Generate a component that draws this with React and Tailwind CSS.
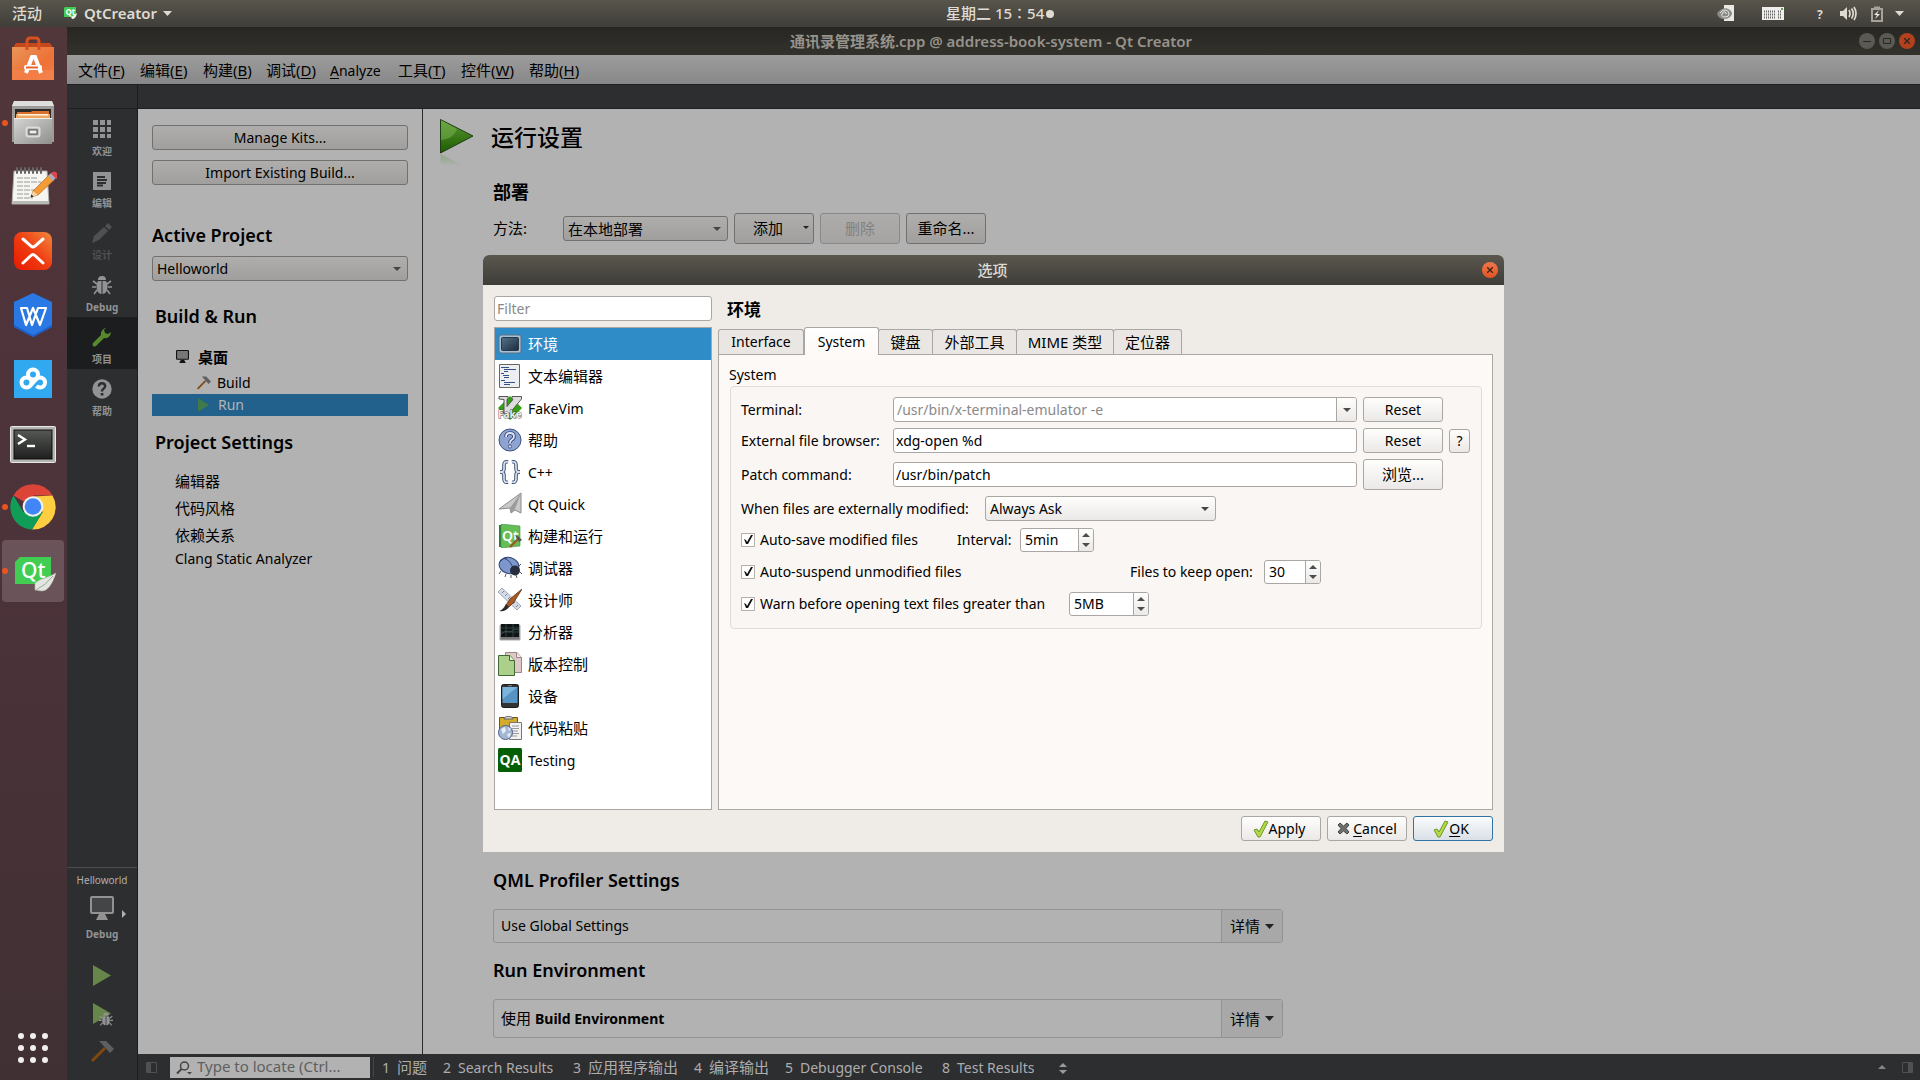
import { useState } from 'react'

const dockItems = [
  { name: 'Ubuntu Software', icon: SoftwareIcon },
  { name: 'Files', icon: FilesIcon, running: true },
  { name: 'Text Editor', icon: NotesIcon },
  { name: 'XMind', icon: XmindIcon },
  { name: 'WPS', icon: WpsIcon },
  { name: 'Baidu Netdisk', icon: NetdiskIcon },
  { name: 'Terminal', icon: TerminalIcon },
  { name: 'Chrome', icon: ChromeIcon, running: true },
  { name: 'Qt Creator', icon: QtIcon, running: true, active: true },
]

const menus = [
  { text: '文件', key: 'F', width: 'w-[62px]' },
  { text: '编辑', key: 'E', width: 'w-[63px]' },
  { text: '构建', key: 'B', width: 'w-[63px]' },
  { text: '调试', key: 'D', width: 'w-[64px]' },
  { text: 'Analyze', width: 'w-[68px]' },
  { text: '工具', key: 'T', width: 'w-[63px]' },
  { text: '控件', key: 'W', width: 'w-[68px]' },
  { text: '帮助', key: 'H', width: 'w-[62px]' },
]

const modes = [
  { label: '欢迎', icon: GridIcon },
  { label: '编辑', icon: EditIcon },
  { label: '设计', icon: PencilIcon, disabled: true },
  { label: 'Debug', icon: BugIcon },
  { label: '项目', icon: WrenchIcon, active: true },
  { label: '帮助', icon: HelpIcon },
]

const outputs = [
  { n: 1, label: '问题', width: 'w-[61px]' },
  { n: 2, label: 'Search Results', width: 'w-[130px]' },
  { n: 3, label: '应用程序输出', width: 'w-[121px]' },
  { n: 4, label: '编译输出', width: 'w-[91px]' },
  { n: 5, label: 'Debugger Console', width: 'w-[157px]' },
  { n: 8, label: 'Test Results', width: 'w-[117px]' },
]

const categories = [
  { label: '环境', icon: EnvIcon },
  { label: '文本编辑器', icon: TextEditorIcon },
  { label: 'FakeVim', icon: VimIcon },
  { label: '帮助', icon: BlueHelpIcon },
  { label: 'C++', icon: BracesIcon },
  { label: 'Qt Quick', icon: PlaneIcon },
  { label: '构建和运行', icon: BuildRunIcon },
  { label: '调试器', icon: BeetleIcon },
  { label: '设计师', icon: BrushIcon },
  { label: '分析器', icon: AnalyzerIcon },
  { label: '版本控制', icon: VersionIcon },
  { label: '设备', icon: DeviceIcon },
  { label: '代码粘贴', icon: PasteIcon },
  { label: 'Testing', icon: QaIcon },
]

const tabs = [
  { label: 'Interface', width: 'w-[86px]' },
  { label: 'System', width: 'w-[75px]' },
  { label: '键盘', width: 'w-[55px]' },
  { label: '外部工具', width: 'w-[85px]' },
  { label: 'MIME 类型', width: 'w-[98px]' },
  { label: '定位器', width: 'w-[69px]' },
]

/* ---------- dock icons ---------- */

function SoftwareIcon() {
  return (
    <svg width="48" height="48" viewBox="0 0 48 48">
      <defs>
        <linearGradient id="bag" x1="0" y1="0" x2="1" y2="1">
          <stop offset="0" stopColor="#e8965a" /><stop offset="0.6" stopColor="#ee7136" /><stop offset="1" stopColor="#f07c48" />
        </linearGradient>
      </defs>
      <path d="M5 11l2-3h34l2 3v7H5z" fill="#c4481c" />
      <path d="M3 12h42v33H3z" fill="url(#bag)" />
      <path d="M3 35h42v10H3z" fill="#f5854e" opacity=".6" />
      <path d="M18 15V7q0-4 3-4h6q3 0 3 4v8" fill="none" stroke="#d9501f" strokeWidth="3" />
      <path d="M17 38l6-16h3l6 16" fill="none" stroke="#fff" strokeWidth="4" />
      <rect x="15" y="30" width="18" height="5" rx="2" fill="#fff" />
      <rect x="17" y="31.500" width="12" height="2" fill="#e8642c" />
    </svg>
  )
}

function FilesIcon() {
  return (
    <svg width="48" height="48" viewBox="0 0 48 48">
      <defs>
        <linearGradient id="cab" x1="0" y1="0" x2="1" y2="1">
          <stop offset="0" stopColor="#d5d5d3" /><stop offset="1" stopColor="#8f8f8e" />
        </linearGradient>
      </defs>
      <path d="M5 2h38l2 5v36H3V7z" fill="#9b9b99" />
      <path d="M5 2h38l2 5H3z" fill="#dededc" />
      <rect x="6" y="10" width="36" height="10" fill="#2c2a29" />
      <path d="M8 13h14l1-1h17v8H8z" fill="#d9702b" />
      <path d="M7 15h34v5H7z" fill="#f0a860" /><path d="M9 15h30v1.500H9z" fill="#fff3e2" />
      <path d="M5 19h38v26H5z" fill="url(#cab)" /><path d="M5 19h38v1H5z" fill="#efefed" />
      <rect x="17.500" y="28.500" width="13" height="9" rx="2" fill="#a0a09e" stroke="#dcdcda" strokeWidth="2" />
      <rect x="20" y="31" width="8" height="4" fill="#eee" stroke="#555" />
    </svg>
  )
}

function NotesIcon() {
  return (
    <svg width="48" height="48" viewBox="0 0 48 48">
      <path d="M5 8h33l2 33H3z" fill="#f5f5f2" stroke="#aaa" />
      <path d="M3 38h37v3H3z" fill="#b8b8b5" />
      <path d="M8 10V5m4 5V5m4 5V5m4 5V5m4 5V5m4 5V5m4 5V5" stroke="#666" strokeWidth="2" strokeLinecap="round" />
      <path d="M8 15h20M8 19h24M8 23h14M8 27h18M8 31h12M8 35h16" stroke="#9a9a98" strokeDasharray="6 1" />
      <path d="M24 28L40 12l5 5-16 15-7 2z" fill="#f29b37" stroke="#b4691c" strokeWidth=".7" />
      <path d="M24 28l-2 6 7-2z" fill="#f3d7ab" /><path d="M22.500 31.500l-1 3 3-1z" fill="#222" />
      <path d="M39 13l3-3 5 5-3 3z" fill="#aab" /><path d="M42 10q3-3 6 0t-1 6z" fill="#e0474b" />
    </svg>
  )
}

function XmindIcon() {
  return (
    <svg width="48" height="48" viewBox="0 0 48 48">
      <defs>
        <linearGradient id="xm" x1="1" y1="0" x2="0" y2="1">
          <stop offset="0" stopColor="#f08a3c" /><stop offset="0.5" stopColor="#f03c12" /><stop offset="1" stopColor="#e61a00" />
        </linearGradient>
      </defs>
      <rect x="5" y="5" width="38" height="38" rx="8" fill="url(#xm)" />
      <path d="M14 12l8 7q2 2 4 0l8-7M14 36l8-7.500q2-2 4 0l8 7.500" fill="none" stroke="#fff" strokeWidth="3" strokeLinecap="round" />
    </svg>
  )
}

function WpsIcon() {
  return (
    <svg width="48" height="48" viewBox="0 0 48 48">
      <path d="M24 2l19 9v25l-19 10L5 36V11z" fill="#2a78e4" />
      <path d="M5 34l19 10 19-10v2L24 46 5 36z" fill="#1c5ec4" />
      <path d="M12 17h6l5 17 6-17h8l-6 17-7-17-7 17z" fill="none" stroke="#fff" strokeWidth="2.200" strokeLinejoin="round" />
    </svg>
  )
}

function NetdiskIcon() {
  return (
    <svg width="48" height="48" viewBox="0 0 48 48">
      <rect x="5" y="5" width="38" height="38" fill="#31a9f0" />
      <g fill="none" stroke="#fff" strokeWidth="4">
        <circle cx="24" cy="19.500" r="5" />
        <circle cx="17.500" cy="27.500" r="5" />
        <path d="M21 31l6.500-7a5 5 0 1 1 0 7" />
      </g>
    </svg>
  )
}

function TerminalIcon() {
  return (
    <svg width="48" height="48" viewBox="0 0 48 48">
      <defs>
        <linearGradient id="term" x1="0" y1="0" x2="0" y2="1">
          <stop offset="0" stopColor="#565856" /><stop offset="1" stopColor="#1e1f1e" />
        </linearGradient>
      </defs>
      <rect x="1.500" y="7.500" width="45" height="36" rx="1" fill="#b4b4b2" stroke="#e8e8e6" />
      <rect x="5" y="11" width="38" height="29" fill="url(#term)" stroke="#0c0c0c" />
      <path d="M9 16l7 4.500L9 25" fill="none" stroke="#fff" strokeWidth="2.400" /><path d="M18 27h8" stroke="#fff" strokeWidth="2.400" />
    </svg>
  )
}

function ChromeIcon() {
  return (
    <svg width="48" height="48" viewBox="0 0 48 48">
      <path d="M24 24L4.500 12.500A22.500 22.500 0 0 1 43.500 12.500H24z" fill="#db4437" />
      <path d="M43.500 12.500A22.500 22.500 0 0 1 23 46.500L33.700 29 24 13.500z" fill="#ffcd40" />
      <path d="M4.500 12.500A22.500 22.500 0 0 0 23 46.500L33.700 29H14.300z" fill="#0f9d58" />
      <circle cx="24" cy="23.500" r="10.300" fill="#f1f1f1" /><circle cx="24" cy="23.500" r="8.300" fill="#4285f4" />
    </svg>
  )
}

function QtIcon() {
  return (
    <svg width="48" height="48" viewBox="0 0 48 48">
      <path d="M11 10h31v27H6V15z" fill="#41cd52" />
      <text x="12" y="31" fontFamily="Noto Sans" fontWeight="500" fontSize="21" fill="#fff">Qt</text>
      <path d="M47 26q-6 18-14 18l-7-1v-7q5-4 10-5 6-2 11-5z" fill="#e3e5e1" stroke="#b6b8b4" strokeWidth=".5" /><path d="M27 43q10-5 17-14" stroke="#a5a7a4" fill="none" />
    </svg>
  )
}

/* ---------- small glyphs ---------- */

function Caret({ className = '' }) {
  return <svg className={className} width="9" height="5" viewBox="0 0 9 5"><path d="M0 0h9L4.500 5z" fill="currentColor" /></svg>
}

function GridIcon() {
  return (
    <svg width="20" height="20" viewBox="0 0 20 20" fill="currentColor">
      <path d="M1 1h5v5H1zM8 1h5v5H8zM15 1h4v5h-4zM1 8h5v5H1zM8 8h5v5H8zM15 8h4v5h-4zM1 15h5v4H1zM8 15h5v4H8zM15 15h4v4h-4z" />
    </svg>
  )
}

function EditIcon() {
  return (
    <svg width="20" height="20" viewBox="0 0 20 20">
      <path d="M1 1h18v18H1z" fill="currentColor" /><path d="M5 6h8M5 9h10M5 12h9M5 14.500h6" stroke="#2d2e30" strokeWidth="1.800" />
    </svg>
  )
}

function PencilIcon() {
  return (
    <svg width="20" height="20" viewBox="0 0 20 20" fill="currentColor">
      <path d="M0 20l2-7L12 4l4 4-9 9zM13 3l3-3 4 4-3 3z" />
    </svg>
  )
}

function BugIcon({ size = 20 }) {
  return (
    <svg width={size} height={size} viewBox="0 0 20 20">
      <path d="M6 5q0-4 4-4t4 4zM9.500 6v13Q5 19 4.500 12q0-5 2-6zM10.500 6v13q4.500 0 5-7 0-5-2-6z" fill="currentColor" />
      <path d="M5 9L1 6M4 12H0M5 15l-3 4M15 9l4-3M16 12h4M15 15l3 4" stroke="currentColor" strokeWidth="1.600" />
    </svg>
  )
}

function WrenchIcon() {
  return (
    <svg width="20" height="20" viewBox="0 0 20 20">
      <path d="M14 1a6 6 0 0 0-5 7l-8 8q-1 2 0 3t3 0l8-8q6 1 7-6l-3 2-3-1-1-3z" fill="#568a2c" />
    </svg>
  )
}

function HelpIcon() {
  return (
    <svg width="20" height="20" viewBox="0 0 20 20">
      <circle cx="10" cy="10" r="9.700" fill="currentColor" />
      <path d="M6.800 7.500Q7 4.300 10 4.300t3.200 2.800Q13.200 9 11 10.200q-1 .6-1 2.300" fill="none" stroke="#2d2e30" strokeWidth="2.400" />
      <path d="M8.700 14h2.700v2.500H8.700z" fill="#2d2e30" />
    </svg>
  )
}

function Monitor({ size = 24, color = '#929292', fill = '#444546' }) {
  return (
    <svg width={size} height={size} viewBox="0 0 24 24">
      <rect x="1" y="1" width="22" height="16" rx="1" fill={fill} stroke={color} strokeWidth="2" />
      <path d="M9 18h6l3 6H6z" fill={color} />
    </svg>
  )
}

function Hammer({ size = 23 }) {
  return (
    <svg width={size} height={size} viewBox="0 0 23 23">
      <path d="M14 8L1 21" stroke="#84480f" strokeWidth="2.800" /><path d="M8 1h7l8 8-4 4z" fill="#5e5f60" />
    </svg>
  )
}

function Tick() {
  return (
    <svg width="16" height="18" viewBox="0 0 16 18">
      <path d="M1 10l3-1 2 3L12 1l3 1-8 15H5z" fill="#b5d84a" stroke="#6b9a24" />
    </svg>
  )
}

function Cross() {
  return (
    <svg width="13" height="13" viewBox="0 0 13 13">
      <path d="M3 1l3.500 3L10 1l2 2-3 3.500 3 3.500-2 2-3.500-3L3 12l-2-2 3-3.500L1 3z" fill="#6d6f6d" stroke="#454745" />
    </svg>
  )
}

/* ---------- option category icons, 24 x 24 ---------- */

function EnvIcon() {
  return (
    <svg width="24" height="24" viewBox="0 0 24 24">
      <defs>
        <linearGradient id="scr" x1="0" y1="0" x2="1" y2="1"><stop offset="0" stopColor="#55728c" /><stop offset="1" stopColor="#1b2b3a" /></linearGradient>
      </defs>
      <rect x="1" y="3" width="22" height="18" rx="2" fill="#a9c0d2" stroke="#5a7388" /><rect x="3.500" y="5.500" width="17" height="13" rx="1" fill="url(#scr)" stroke="#25394a" />
    </svg>
  )
}

function TextEditorIcon() {
  return (
    <svg width="24" height="24" viewBox="0 0 24 24">
      <path d="M1.500.5h20v23h-20z" fill="#eeeef0" stroke="#666" />
      <path d="M3 3.500h8M6 5.500h12M6 7.500h4M3 9.500h3M5 11.500h6M6 13.500h5M3 16.500h4M6 18.500h11M6 20.500h6" stroke="#31508c" />
    </svg>
  )
}

function VimIcon() {
  return (
    <svg width="24" height="24" viewBox="0 0 24 24">
      <path d="M12 0l12 12-12 12L0 12z" fill="#31a013" />
      <path d="M1 .5h9V3L9 3.500v7L15 3.500 14 3V.5h9.500V3L11 18H6V3.500L1 3z" fill="#ddd" stroke="#555" />
      <text x="0" y="22" fontFamily="Noto Sans" fontWeight="700" fontSize="10" fill="#eee" stroke="#444" strokeWidth=".8" paintOrder="stroke">Fake</text>
    </svg>
  )
}

function BlueHelpIcon() {
  return (
    <svg width="24" height="24" viewBox="0 0 24 24">
      <circle cx="12" cy="12" r="11" fill="#8ea3d0" stroke="#3d5080" />
      <path d="M8 9q0-4 4-4t4 3.500q0 2-2.500 3.500-1.500 1-1.500 3" fill="none" stroke="#33457a" strokeWidth="3.600" /><path d="M8 9q0-4 4-4t4 3.500q0 2-2.500 3.500-1.500 1-1.500 3" fill="none" stroke="#dfe6f5" strokeWidth="1.800" />
      <circle cx="12" cy="18.500" r="1.600" fill="#dfe6f5" stroke="#33457a" strokeWidth=".8" />
    </svg>
  )
}

function BracesIcon() {
  return (
    <svg width="24" height="24" viewBox="0 0 24 24" fill="none">
      <path d="M10 2Q6 1 6 5v4q0 3-4 3 4 0 4 3v4q0 4 4 3M14 2q4-1 4 3v4q0 3 4 3-4 0-4 3v4q0 4-4 3" stroke="#3d5578" strokeWidth="3.600" />
      <path d="M10 2Q6 1 6 5v4q0 3-4 3 4 0 4 3v4q0 4 4 3M14 2q4-1 4 3v4q0 3 4 3-4 0-4 3v4q0 4-4 3" stroke="#dfe6f0" strokeWidth="1.600" />
    </svg>
  )
}

function PlaneIcon() {
  return (
    <svg width="24" height="24" viewBox="0 0 24 24">
      <path d="M23 1v20l-6-3-4 3-1-5-11 1z" fill="#c9c9c9" stroke="#8b8b8b" /><path d="M23 1L12 16l1 5 4-4z" fill="#9b9b9b" />
    </svg>
  )
}

function BuildRunIcon() {
  return (
    <svg width="24" height="24" viewBox="0 0 24 24">
      <path d="M1 1h2v22H1z" fill="#2b7d2f" /><path d="M3 0l19 2v20L3 24z" fill="#67bd55" stroke="#3d9040" strokeWidth=".6" />
      <text x="4" y="17" fontFamily="Noto Sans" fontWeight="600" fontSize="14" fill="#fff">Qt</text>
      <path d="M12 23l8-8" stroke="#9a5a25" strokeWidth="2.400" /><path d="M17 11l3 1 4 4-3 2z" fill="#555" />
    </svg>
  )
}

function BeetleIcon() {
  return (
    <svg width="24" height="24" viewBox="0 0 24 24">
      <path d="M3 15l-2 3M8 18l-1 3M13 19v3M21 10l2-2M22 16l2 2M18 19l1 3" stroke="#555" />
      <ellipse cx="11" cy="9.500" rx="10" ry="8" fill="#7d96cc" stroke="#2f4272" transform="rotate(15 11 9.500)" />
      <path d="M6 2q8 3 10 14M2 6Q4 2 9 2" stroke="#33467a" fill="none" /><circle cx="17" cy="14.500" r="5" fill="#262d3f" />
    </svg>
  )
}

function BrushIcon() {
  return (
    <svg width="24" height="24" viewBox="0 0 24 24">
      <path d="M0 4l4-4 19 18-4 4z" fill="#d5dbe6" stroke="#8d97a8" strokeWidth=".8" /><path d="M4 5l2-2M7 8l2-2M10 11l2-2M15 16l2-2M18 19l2-2" stroke="#78849a" />
      <path d="M24 1L12 11l-4 6 3 2 5-5z" fill="#a85a24" stroke="#5c2d0c" strokeWidth=".8" /><path d="M8 16l3 3q-3 5-10 4 4-1 7-7z" fill="#2b2b2b" />
    </svg>
  )
}

function AnalyzerIcon() {
  return (
    <svg width="24" height="24" viewBox="0 0 24 24">
      <path d="M2 5h20v15H2z" fill="#777" stroke="#aaa" /><path d="M3 4h18v13H3z" fill="#101414" />
      <path d="M3 8h18M3 12h18M8 4v13M15 4v13" stroke="#38555a" strokeWidth=".7" /><path d="M3 14l5-3 4 1 5-3 4 1" stroke="#566" fill="none" strokeWidth=".6" />
    </svg>
  )
}

function VersionIcon() {
  return (
    <svg width="24" height="24" viewBox="0 0 24 24">
      <path d="M7.500.5H19l4.500 5v15h-16z" fill="#e0c8c8" stroke="#9a8585" /><path d="M18.500.5v5h5" fill="#f4e8e8" stroke="#9a8585" />
      <path d="M.5 3.500H12l4.500 5v15H.5z" fill="#acd08c" stroke="#3f6a34" /><path d="M11.500 3.500v5h5" fill="#e8f3d8" stroke="#3f6a34" />
    </svg>
  )
}

function DeviceIcon() {
  return (
    <svg width="24" height="24" viewBox="0 0 24 24">
      <rect x="3.500" y=".5" width="17" height="23" rx="2" fill="#333" stroke="#1c1c1c" /><rect x="4.500" y="3" width="15" height="16" fill="#5794c6" /><path d="M4.500 3h15L4.500 15z" fill="#7db4de" />
      <path d="M10 1.700h4" stroke="#888" />
    </svg>
  )
}

function PasteIcon() {
  return (
    <svg width="24" height="24" viewBox="0 0 24 24">
      <path d="M1.500 1.500h18v18h-18z" fill="#d5ab2c" stroke="#6f5610" /><path d="M6 3q0-2.500 4.500-2.500T15 3z" fill="#d8d8d8" stroke="#666" />
      <path d="M11.500 6.500h12v17h-12z" fill="#f2f2f2" stroke="#777" /><path d="M14 10h7M14 12.500h7M14 15h6M14 17.500h7M14 20h5" stroke="#999" />
      <circle cx="7.500" cy="16.500" r="7" fill="#a4b7d4" stroke="#49608a" /><path d="M3 13l4-2 1 4-3 3zM9 18l4-1-2 5zM10 11l3 2-2 2z" fill="#e9eef6" />
    </svg>
  )
}

function QaIcon() {
  return (
    <svg width="24" height="24" viewBox="0 0 24 24">
      <rect width="24" height="24" rx="1.500" fill="#045e04" />
      <text x="12" y="17" textAnchor="middle" fontFamily="Open Sans" fontWeight="700" fontSize="14" fill="#fff">QA</text>
    </svg>
  )
}

/* ---------- desktop chrome ---------- */

function TopBar() {
  return (
    <header className="relative flex h-[27px] shrink-0 items-center justify-between bg-linear-to-b from-[#58554c] to-[#403e39] pr-4 pl-3 text-[#dfdbd2]">
      <div className="flex items-center">
        <button className="w-[52px] text-left text-[15px] font-medium">活动</button>
        <button className="flex items-center text-[15px] font-semibold">
          <svg className="mr-[7px] shrink-0" width="13" height="13" viewBox="0 0 13 13">
            <path d="M1 0h11v10H0V1z" fill="#41cd52" /><text x="1.500" y="8" fontFamily="Noto Sans" fontWeight="700" fontSize="8" fill="#fff">Qt</text><path d="M13 6q-1 6-5 6l-1-2z" fill="#eee" />
          </svg>
          QtCreator
          <Caret className="ml-1.5" />
        </button>
      </div>
      <button className="absolute left-1/2 flex w-[109px] -translate-x-[14px] items-center gap-0.5 text-[15px] font-medium whitespace-nowrap">
        星期二 15∶54
        <span className="size-2 shrink-0 rounded-full bg-[#dfdbd2]" />
      </button>
      <div className="flex items-center">
        <svg className="mr-[27px]" width="18" height="17" viewBox="0 0 18 17">
          <path d="M7 0h10v16H7z" fill="#e8e8e4" />
          <path d="M0 8Q5 2 10 3.500T15 9q-2 5-8 5T0 8z" fill="#8a8a84" /><path d="M3 8q3-4 6-3t3 4-4 3-3-3 3-2 1 2" fill="none" stroke="#e8e8e4" />
        </svg>
        <svg className="mr-[33px]" width="22" height="14" viewBox="0 0 22 14">
          <path d="M0 0h22v13H0z" fill="#eeeeec" /><path d="M2 4.500h12M2 7.500h12M2 10.500h12M16 4.500h4M16 7.500h4M16 10.500h4" stroke="#666" strokeWidth="2" strokeDasharray="1 1" /><path d="M19 1h2v2h-2z" fill="#5a5" />
        </svg>
        <span className="w-[23px] pt-0.5 text-xs font-bold">?</span>
        <svg className="mr-[14px]" width="17" height="15" viewBox="0 0 17 15" fill="none" stroke="#dfdbd2" strokeWidth="1.700">
          <path d="M0 5h3l4-4v13l-4-4H0z" fill="#dfdbd2" stroke="none" /><path d="M9 4q2 3.500 0 7M11.500 2.500q3.500 5 0 10M14 1q4 6.500 0 13" />
        </svg>
        <svg className="mr-[12px]" width="12" height="16" viewBox="0 0 12 16">
          <path d="M3 1.500h6M1 3h10v12H1z" fill="none" stroke="#a5a29a" strokeWidth="2" /><path d="M8 4L3 9h3l-2 4 5-5H6z" fill="#efece4" />
        </svg>
        <Caret />
      </div>
    </header>
  )
}

function Dock() {
  return (
    <nav className="flex w-[67px] shrink-0 flex-col justify-between bg-linear-to-b from-[#51363a] via-[#4c333a] to-[#403033]">
      <ul>
        {dockItems.map(({ name, icon: Icon, running, active }) => (
          <li key={name} className="flex h-16 items-center">
            <span className={`-mr-[5px] ml-0.5 size-1.5 shrink-0 rounded-full ${running ? 'z-10 bg-[#e95420]' : ''}`} />
            <button aria-label={name} className={`-ml-px flex size-[62px] shrink-0 items-center justify-center rounded ${active ? 'bg-[#6a545a]' : ''}`}>
              <Icon />
            </button>
          </li>
        ))}
      </ul>
      <button aria-label="Show Applications" className="mb-[17px] ml-[18px] grid w-[30px] grid-cols-3 gap-1.5">
        {Array.from({ length: 9 }, (_, i) => <span key={i} className="size-1.5 rounded-full bg-[#f2f0ee]" />)}
      </button>
    </nav>
  )
}

function WindowTitle() {
  return (
    <div className="flex h-[28px] shrink-0 items-center bg-linear-to-b from-[#272622] to-[#34322d] pr-[5px]">
      <h1 className="ml-[56px] flex-1 text-center text-[15px] font-semibold text-[#96938c]">通讯录管理系统.cpp @ address-book-system - Qt Creator</h1>
      <div className="flex gap-1">
        <button aria-label="Minimize" className="flex size-4 items-center justify-center rounded-full bg-[#5a5953] text-[#292823]">
          <svg width="8" height="8" viewBox="0 0 8 8"><path d="M0 4.500h8" stroke="currentColor" /></svg>
        </button>
        <button aria-label="Maximize" className="flex size-4 items-center justify-center rounded-full bg-[#5a5953] text-[#292823]">
          <svg width="8" height="8" viewBox="0 0 8 8"><path d="M.5 1.500h7v5h-7z" fill="none" stroke="currentColor" /></svg>
        </button>
        <button aria-label="Close" className="flex size-4 items-center justify-center rounded-full bg-[#b3411d] text-[#292823]">
          <svg width="6" height="6" viewBox="0 0 6 6"><path d="M0 0l6 6M6 0L0 6" stroke="currentColor" strokeWidth="1.300" /></svg>
        </button>
      </div>
    </div>
  )
}

function MenuBar() {
  return (
    <nav className="flex h-[29px] shrink-0 items-center bg-linear-to-b from-[#9c9c9c] to-[#888888] pt-0.5 pl-[11px] text-black">
      {menus.map(m => (
        <button key={m.text} className={`text-left whitespace-nowrap ${m.width} ${m.key ? 'text-[15px]' : 'text-sm'}`}>
          {m.key
            ? <>{m.text}(<u className="underline-offset-2">{m.key}</u>)</>
            : <><u className="underline-offset-2">A</u>nalyze</>}
        </button>
      ))}
    </nav>
  )
}

function ModeBar() {
  return (
    <aside className="flex w-[71px] shrink-0 flex-col justify-between border-r border-[#1b1c1d] bg-[#2d2e30] text-[10px] font-bold text-[#929394]">
      <div className="border-t border-[#1f2021]">
        {modes.map(({ label, icon: Icon, active, disabled }) => (
          <button key={label} disabled={disabled} className={`flex h-[52px] w-full flex-col items-center pt-2.5 leading-4 ${active ? 'bg-[#1c1d1e]' : ''} ${disabled ? 'text-[#4f5051]' : ''}`}>
            <Icon />
            <span className="mt-1">{label}</span>
          </button>
        ))}
      </div>
      <div className="flex flex-col items-center border-t border-[#4b4c4d] pb-[17px]">
        <span className="mt-1 text-[10px] leading-4 font-normal text-[#b0b0b0]">Helloworld</span>
        <button className="relative mt-2 flex flex-col items-center leading-4">
          <Monitor />
          <svg className="absolute top-3.5 left-9" width="4" height="8" viewBox="0 0 4 8"><path d="M0 0l4 4-4 4z" fill="#b0b0b0" /></svg>
          <span className="mt-1.5">Debug</span>
        </button>
        <button aria-label="Run" className="mt-[22px]">
          <svg width="18" height="23" viewBox="0 0 18 23"><path d="M0 1l18 10.500L0 22z" fill="#67864a" /></svg>
        </button>
        <button aria-label="Start Debugging" className="relative mt-[15px]">
          <svg width="18" height="23" viewBox="0 0 18 23"><path d="M0 1l18 10.500L0 22z" fill="#67864a" /></svg>
          <span className="absolute top-2.5 left-1.5"><BugIcon size={14} /></span>
        </button>
        <button aria-label="Build" className="mt-[15px]"><Hammer /></button>
      </div>
    </aside>
  )
}

const dimButton = 'rounded-[3px] border border-[#72706e] bg-linear-to-b from-[#b0aeac] to-[#a19f9d] text-black'

function Select({ label, id, options, className, wrap }) {
  return (
    <span className={`relative inline-flex ${wrap}`}>
      <select id={id} aria-label={label} className={`h-[25px] w-full appearance-none pr-5 pl-1 leading-5 ${className}`}>
        {options.map(o => <option key={o}>{o}</option>)}
      </select>
      <svg className="pointer-events-none absolute top-[11px] right-[7px]" width="8" height="4" viewBox="0 0 8 4"><path d="M0 0h8L4 4z" fill="#444" /></svg>
    </span>
  )
}

function ProjectPanel() {
  return (
    <section className="w-[285px] shrink-0 border-r border-[#2c2c2c] bg-[#b2b2b2] px-3.5 pt-4 text-sm text-black">
      <button className={`block h-[25px] w-full ${dimButton}`}>Manage Kits...</button>
      <button className={`mt-2.5 block h-[25px] w-full ${dimButton}`}>Import Existing Build...</button>
      <h2 className="mt-[38px] text-lg leading-6 font-semibold">Active Project</h2>
      <Select label="Active Project" options={['Helloworld']} wrap="mt-[9px] w-full" className={dimButton} />
      <h2 className="mt-[23px] ml-[3px] text-lg leading-6 font-semibold">Build &amp; Run</h2>
      <ul className="mt-4">
        <li className="flex h-7 items-center pl-6 text-[15px] font-bold"><span className="mr-[9px] -mt-1"><Monitor size={13} color="#141414" fill="#777" /></span>桌面</li>
        <li className="flex h-[22px] items-center pl-[45px]"><span className="mr-1.5"><Hammer size={14} /></span>Build</li>
        <li className="flex h-[22px] items-center bg-[#22618b] pl-[46px] text-[#b4b4b4]">
          <svg className="mr-[9px]" width="11" height="14" viewBox="0 0 11 14"><path d="M0 0l11 7-11 7z" fill="#3f7a4a" /></svg>Run
        </li>
      </ul>
      <h2 className="mt-3.5 ml-[3px] text-lg leading-6 font-semibold">Project Settings</h2>
      <ul className="mt-[14px] pl-[23px] text-[15px] leading-[27px]">
        <li>编辑器</li>
        <li>代码风格</li>
        <li>依赖关系</li>
        <li className="text-sm leading-5">Clang Static Analyzer</li>
      </ul>
    </section>
  )
}

function DetailsBox({ height, children }) {
  return (
    <div className={`flex w-[790px] rounded-[3px] border border-[#929292] ${height}`}>
      <p className="flex flex-1 items-center pl-[7px]">{children}</p>
      <button className="flex w-[61px] items-center justify-center gap-[5px] border-l border-[#929292] bg-[#a8a8a8] pt-0.5 text-[15px]">
        详情<Caret className="-mt-0.5 text-[#222]" />
      </button>
    </div>
  )
}

function RunSettings() {
  return (
    <main className="flex flex-1 flex-col justify-between bg-[#b2b2b2] text-sm text-black">
      <section className="pt-2.5 pl-[17px]">
        <div className="flex gap-4">
          <svg width="35" height="48" viewBox="0 0 35 48">
            <defs>
              <linearGradient id="go" x1="0" y1="0" x2="0" y2="1"><stop offset="0" stopColor="#5b9a33" /><stop offset="1" stopColor="#1c5c00" /></linearGradient>
              <linearGradient id="refl" x1="0" y1="0" x2="0" y2="1"><stop offset="0" stopColor="#8fa685" /><stop offset="1" stopColor="#b2b2b2" /></linearGradient>
            </defs>
            <path d="M.5.5L33 17 .5 34z" fill="url(#go)" stroke="#1f3d12" />
            <path d="M1 1l16 9Q14 20 1 21z" fill="#7cb356" opacity=".5" /><path d="M.5 35L24 47H.5z" fill="url(#refl)" />
          </svg>
          <h2 className="text-[23px] leading-9 font-medium">运行设置</h2>
        </div>
        <div className="mt-[13px] pl-[53px]">
          <h3 className="text-lg leading-6 font-bold">部署</h3>
          <div className="mt-[9px] flex h-[31px] items-center gap-1.5 text-[15px]">
            <label htmlFor="deploy" className="w-16">方法:</label>
            <Select id="deploy" options={['在本地部署']} wrap="w-[165px]" className={dimButton} />
            <button className={`relative h-[31px] w-20 pr-3 ${dimButton}`}>添加<svg className="absolute top-3 right-1" width="6" height="4" viewBox="0 0 6 4"><path d="M0 0h6L3 3z" fill="#222" /></svg></button>
            <button disabled className="h-[31px] w-20 rounded-[3px] border border-[#8b8987] bg-linear-to-b from-[#aeacab] to-[#a6a4a2] text-[#838180]">删除</button>
            <button className={`h-[31px] w-20 ${dimButton}`}>重命名...</button>
          </div>
        </div>
      </section>
      <section className="pb-4 pl-[70px]">
        <h3 className="text-lg leading-6 font-semibold">QML Profiler Settings</h3>
        <div className="mt-[17px]"><DetailsBox height="h-[34px]">Use Global Settings</DetailsBox></div>
        <h3 className="mt-[15px] text-lg leading-6 font-semibold">Run Environment</h3>
        <div className="mt-[17px]"><DetailsBox height="h-[39px]"><span className="mr-1 text-[15px]">使用</span><b>Build Environment</b></DetailsBox></div>
      </section>
    </main>
  )
}

function StatusBar() {
  return (
    <footer className="flex h-[26px] shrink-0 items-center bg-[#2d2e30] pr-[7px] pl-2 text-sm text-[#adadad]">
      <svg width="11" height="11" viewBox="0 0 11 11"><path d="M.5.5h10v10H.5z" fill="none" stroke="#505152" /><path d="M1 1h4v9H1z" fill="#505152" /></svg>
      <div className="relative ml-[13px] w-[200px]">
        <svg className="absolute top-1 left-1.5" width="16" height="14" viewBox="0 0 16 14" fill="none" stroke="#444" strokeWidth="1.500">
          <circle cx="8.500" cy="5" r="4" /><path d="M5.500 8L1 12.500" strokeWidth="2" /><path d="M11 11h5l-2.500 2.500z" fill="#444" stroke="none" />
        </svg>
        <input aria-label="Locator" placeholder="Type to locate (Ctrl..." className="block h-[21px] w-full bg-[#b2b2b2] pl-[27px] text-[15px] placeholder:text-[#5f5f5f]" />
      </div>
      <div className="ml-[3px] flex h-5 items-center border-l border-[#454647] pt-0.5 pl-2">
        {outputs.map(o => (
          <button key={o.n} className={`flex items-center whitespace-nowrap ${o.width}`}>
            <span className="w-[15px] text-left">{o.n}</span>
            <span className={/[a-z]/.test(o.label) ? '' : 'text-[15px]'}>{o.label}</span>
          </button>
        ))}
        <svg width="8" height="11" viewBox="0 0 8 11" fill="#9a9a9a"><path d="M0 4h8L4 0zM0 7h8l-4 4z" /></svg>
      </div>
      <svg className="mr-4 ml-auto" width="8" height="4" viewBox="0 0 8 4"><path d="M0 4h8L4 0z" fill="#858585" /></svg>
      <svg width="11" height="11" viewBox="0 0 11 11"><path d="M.5.5h10v10H.5z" fill="none" stroke="#505152" /><path d="M6 1h4v9H6z" fill="#505152" /></svg>
    </footer>
  )
}

/* ---------- options dialog ---------- */

const button = 'rounded-[3px] border border-[#aaa6a3] bg-linear-to-b from-[#fefefd] to-[#ebe9e7] text-black'
const field = 'rounded-[3px] border border-[#aaa6a3] bg-white text-black'

function Spin({ id, value, width }) {
  return (
    <span className={`flex h-6 overflow-hidden ${field} ${width}`}>
      <input id={id} aria-label={id} defaultValue={value} className="w-0 flex-1 pl-1 text-sm" />
      <span className="flex w-[15px] flex-col items-center justify-center border-l border-[#aaa6a3] bg-linear-to-b from-[#fefefd] to-[#ebe9e7] text-[#4c4c4c]">
        <button aria-label="Increase" className="flex h-2.5 w-full items-center justify-center"><svg width="8" height="4" viewBox="0 0 8 4"><path d="M0 4h8L4 0z" fill="currentColor" /></svg></button>
        <button aria-label="Decrease" className="flex h-2.5 w-full items-center justify-center"><svg width="8" height="4" viewBox="0 0 8 4"><path d="M0 0h8L4 4z" fill="currentColor" /></svg></button>
      </span>
    </span>
  )
}

function Check({ children, width }) {
  return (
    <label className={`flex items-center gap-[5px] whitespace-nowrap ${width}`}>
      <span className="relative size-3.5 shrink-0">
        <input type="checkbox" defaultChecked className="peer block size-3.5 appearance-none border border-[#b5b1ad] bg-white" />
        <svg className="pointer-events-none absolute top-[2px] left-[3px] hidden peer-checked:block" width="9" height="9" viewBox="0 0 9 9"><path d="M0 4l2 1 1 2L7 0h2L4 9H2z" fill="#111" /></svg>
      </span>
      {children}
    </label>
  )
}

function SystemPage() {
  return (
    <fieldset className="text-sm">
      <legend className="h-5 leading-5">System</legend>
      <div className="mt-px ml-px rounded-sm border border-[#e0dcd9] bg-[#faf6f3] py-2.5 pr-[11px] pb-3 pl-2.5">
        <div className="grid grid-cols-[146px_1fr_80px_21px] items-center gap-1.5">
          <label htmlFor="terminal">Terminal:</label>
          <div className={`flex h-[25px] overflow-hidden ${field}`}>
            <input id="terminal" placeholder="/usr/bin/x-terminal-emulator -e" className="w-0 flex-1 pl-[3px] placeholder:text-[#8b8987]" />
            <button aria-label="Terminal list" className="flex w-5 items-center justify-center border-l border-[#aaa6a3] bg-linear-to-b from-[#fefefd] to-[#ebe9e7] text-[#4c4c4c]">
              <svg width="8" height="4" viewBox="0 0 8 4"><path d="M0 0h8L4 4z" fill="currentColor" /></svg>
            </button>
          </div>
          <button className={`h-[25px] ${button}`}>Reset</button>
          <span />
          <label htmlFor="browser" className="whitespace-nowrap">External file browser:</label>
          <input id="browser" defaultValue="xdg-open %d" className={`h-[25px] pl-0.5 ${field}`} />
          <button className={`h-[25px] ${button}`}>Reset</button>
          <button className={`h-6 ${button}`}>?</button>
          <label htmlFor="patch">Patch command:</label>
          <input id="patch" defaultValue="/usr/bin/patch" className={`h-[25px] pl-0.5 ${field}`} />
          <button className={`h-[31px] text-[15px] ${button}`}>浏览...</button>
        </div>
        <div className="mt-1.5 flex h-[25px] items-center">
          <label htmlFor="modified" className="w-[244px] whitespace-nowrap">When files are externally modified:</label>
          <Select id="modified" options={['Always Ask']} wrap="w-[231px]" className={button} />
        </div>
        <div className="mt-[7px] flex h-6 items-center">
          <Check width="w-[216px]">Auto-save modified files</Check>
          <label htmlFor="interval" className="w-[63px]">Interval:</label>
          <Spin id="interval" value="5min" width="w-[74px]" />
        </div>
        <div className="mt-2 flex h-6 items-center">
          <Check width="w-[389px]">Auto-suspend unmodified files</Check>
          <label htmlFor="keep" className="w-[134px] whitespace-nowrap">Files to keep open:</label>
          <Spin id="keep" value="30" width="w-[57px]" />
        </div>
        <div className="mt-2 flex h-6 items-center">
          <Check width="w-[328px]">Warn before opening text files greater than</Check>
          <Spin id="greater" value="5MB" width="w-[80px]" />
        </div>
      </div>
    </fieldset>
  )
}

function OptionsDialog() {
  const [category, setCategory] = useState('环境')
  const [tab, setTab] = useState('System')

  return (
    <div role="dialog" aria-label="选项" className="flex h-[597px] w-[1021px] flex-col overflow-hidden rounded-t-md bg-[#efebe7] text-sm text-black">
      <div className="flex h-[30px] shrink-0 items-center bg-linear-to-b from-[#5a574e] to-[#3e3d38] pr-1.5 pl-5">
        <h2 className="flex-1 pt-0.5 text-center text-[15px] font-medium text-[#dfdbd2]">选项</h2>
        <button aria-label="Close" className="flex size-4 items-center justify-center rounded-full bg-linear-to-b from-[#f0764c] to-[#e0541f] text-[#3c2318]">
          <svg width="6" height="6" viewBox="0 0 6 6"><path d="M0 0l6 6M6 0L0 6" stroke="currentColor" strokeWidth="1.300" /></svg>
        </button>
      </div>
      <div className="flex min-h-0 flex-1 gap-1.5 px-[11px] pt-[11px]">
        <div className="flex w-[218px] flex-col gap-1.5">
          <input aria-label="Filter" placeholder="Filter" className={`h-[25px] pl-0.5 text-sm placeholder:text-[#8b8987] ${field}`} />
          <ul className="flex-1 border border-[#aaa6a3] bg-white">
            {categories.map(({ label, icon: Icon }) => (
              <li key={label}>
                <button
                  onClick={() => setCategory(label)}
                  className={`flex h-8 w-full items-center gap-1.5 pl-[3px] ${category === label ? 'bg-[#308cc6] text-white' : ''} ${/[a-zA-Z]/.test(label) ? 'text-sm' : 'text-[15px]'}`}>
                  <Icon />
                  <span className="pt-0.5">{label}</span>
                </button>
              </li>
            ))}
          </ul>
        </div>
        <div className="flex flex-1 flex-col">
          <h3 className="h-[31px] pl-[9px] text-[17px] leading-7 font-bold">环境</h3>
          <div role="tablist" className="flex h-[27px] shrink-0 items-end">
            {tabs.map(t => (
              <button
                key={t.label}
                role="tab"
                aria-selected={tab === t.label}
                onClick={() => setTab(t.label)}
                className={`border border-b-0 border-[#aaa6a3] whitespace-nowrap ${t.width} ${/[a-z]/.test(t.label) ? 'text-sm' : 'pt-0.5 text-[15px]'} ${tab === t.label ? 'z-10 -mb-px h-7 rounded-t-[3px] bg-linear-to-b from-white to-[#fdf9f6]' : '-ml-px h-[25px] rounded-t-[3px] bg-[#eae6e3] first:ml-0'}`}>
                {t.label}
              </button>
            ))}
          </div>
          <div className="flex-1 border border-[#aaa6a3] bg-[#fdf9f6] p-2.5">
            <SystemPage />
          </div>
        </div>
      </div>
      <div className="flex justify-end gap-1.5 px-[11px] pt-1.5 pb-[11px]">
        <button className={`flex h-[25px] w-20 items-center justify-center pr-1 ${button}`}><Tick />Apply</button>
        <button className={`flex h-[25px] w-20 items-center justify-center gap-[3px] ${button}`}><Cross /><span><u className="underline-offset-2">C</u>ancel</span></button>
        <button className="flex h-[25px] w-20 items-center justify-center rounded-[3px] border border-[#2f74a3] bg-linear-to-b from-[#fafcfd] to-[#d9e0e6] pr-1"><Tick /><span><u className="underline-offset-2">O</u>K</span></button>
      </div>
    </div>
  )
}

export default function App() {
  return (
    <div className="flex h-screen flex-col overflow-hidden bg-[#2d2e30] font-['Noto_Sans','Noto_Sans_CJK_SC',sans-serif]">
      <TopBar />
      <div className="flex min-h-0 flex-1">
        <Dock />
        <div className="relative flex min-w-0 flex-1 flex-col">
          <WindowTitle />
          <MenuBar />
          <div className="flex h-6 shrink-0 border-t border-[#1f2021] bg-[#2d2e30]"><span className="w-[71px] border-r border-[#1b1c1d]" /></div>
          <div className="flex min-h-0 flex-1">
            <ModeBar />
            <div className="flex min-w-0 flex-1 flex-col">
              <div className="h-px bg-[#1f2021]" />
              <div className="flex min-h-0 flex-1">
                <ProjectPanel />
                <RunSettings />
              </div>
              <StatusBar />
            </div>
          </div>
          <div className="absolute inset-0 flex items-center justify-center">
            <OptionsDialog />
          </div>
        </div>
      </div>
    </div>
  )
}
